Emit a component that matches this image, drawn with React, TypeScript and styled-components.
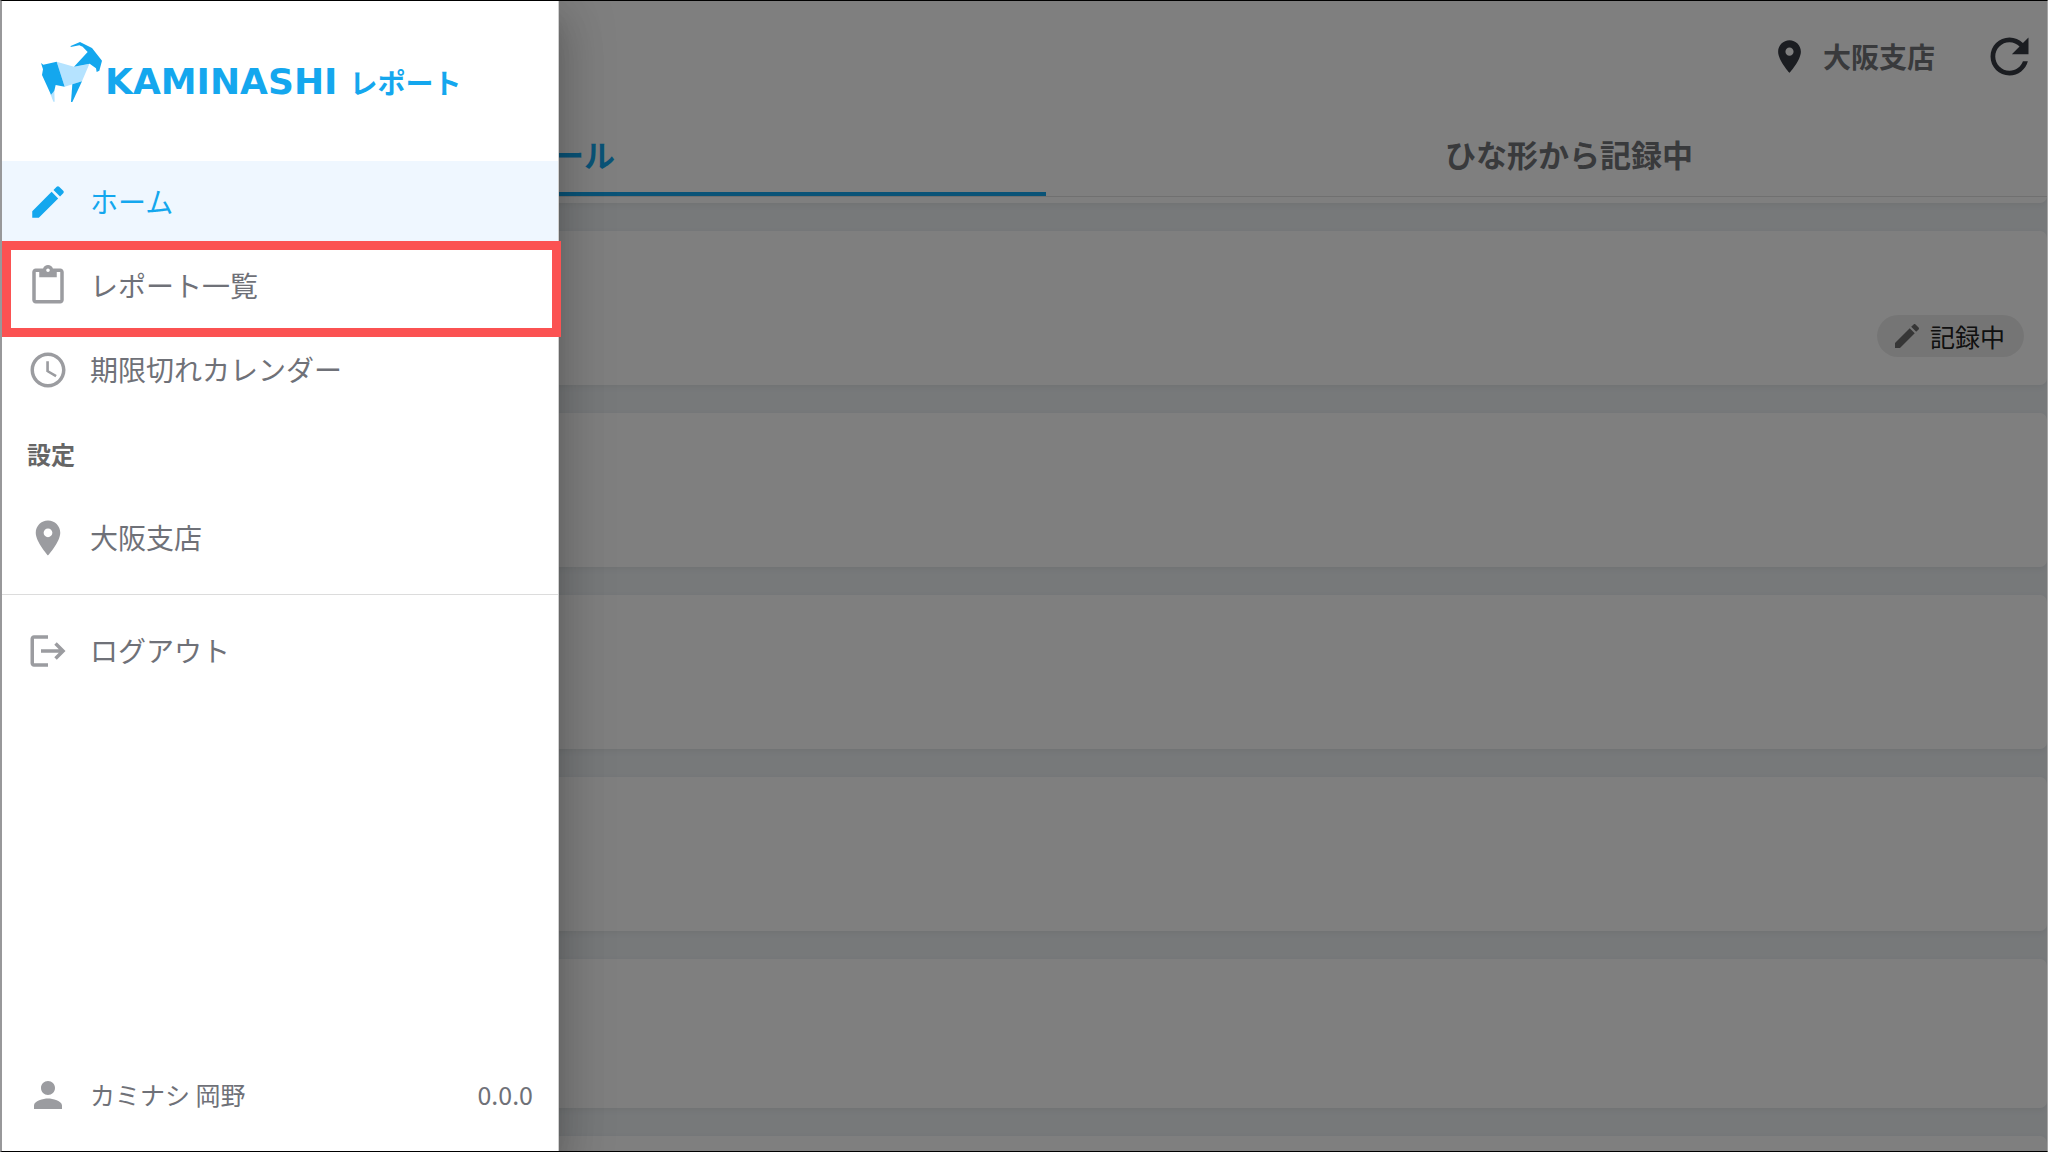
import React from "react";
import styled, { createGlobalStyle } from "styled-components";

const blue = "#14a7ee";
const ink = "#6f7178";
const iconGrey = "#9b9ca0";
const headerInk = "#727478";
const headerIcon = "#373a43";

const GlobalStyle = createGlobalStyle`
  * { box-sizing: border-box; }
  body {
    margin: 0;
    font-family: "Noto Sans CJK JP", sans-serif;
    background: #eef2f5;
    overflow: hidden;
  }
  button { font-family: inherit; border: 0; background: none; padding: 0; cursor: pointer; }
`;

const Screen = styled.div`
  position: relative;
  height: 100vh;
  overflow: hidden;
`;

const Frame = styled.div`
  position: absolute;
  inset: 0;
  border-top: 1px solid #000;
  border-bottom: 1px solid #000;
  border-left: 2px solid #98989a;
  border-right: 1px solid #a6a6a6;
  pointer-events: none;
`;

const Page = styled.div`
  display: flex;
  flex-direction: column;
  gap: 28px;
  height: 100%;
  padding-right: 1px;
`;

const Header = styled.header`
  background: #fff;
  border-radius: 0 0 7px 7px;
  box-shadow: 0 2px 6px rgba(0, 0, 0, 0.06);
  padding-bottom: 6px;
`;

const Toolbar = styled.div`
  display: flex;
  align-items: center;
  justify-content: flex-end;
  height: 112px;
  padding-right: 9px;
`;

const BranchButton = styled.button`
  display: flex;
  align-items: center;
  gap: 14px;
  margin-right: 46px;
  font-size: 28px;
  line-height: 42px;
  font-weight: 700;
  color: ${headerInk};
`;

const RefreshButton = styled.button`
  display: flex;
`;

const Tabs = styled.nav`
  display: flex;
  height: 85px;
  border-bottom: 1px solid #e0e0e0;
  overflow: hidden;
`;

const Tab = styled.button<{ $active?: boolean }>`
  flex: 0 0 51.1%;
  padding-top: 3px;
  font-size: 31px;
  line-height: 48px;
  font-weight: 700;
  color: ${(p) => (p.$active ? blue : headerInk)};
  border-bottom: 4px solid ${(p) => (p.$active ? blue : "transparent")};
`;

const Cards = styled.main`
  display: flex;
  flex-direction: column;
  gap: 28px;
`;

const Card = styled.article<{ $short?: boolean }>`
  display: flex;
  align-items: flex-end;
  justify-content: flex-end;
  flex: none;
  height: ${(p) => (p.$short ? 149 : 154)}px;
  padding: 28px 23px;
  background: #fff;
  border-radius: 7px;
  box-shadow: 0 2px 6px rgba(0, 0, 0, 0.06);
`;

const Chip = styled.span`
  display: flex;
  align-items: center;
  gap: 7px;
  height: 42px;
  padding: 0 19px 0 14px;
  border-radius: 21px;
  background: #ebebeb;
  color: #212121;
  font-size: 25px;
  line-height: 36px;
`;

const Backdrop = styled.div`
  position: absolute;
  inset: 0;
  background: rgba(0, 0, 0, 0.5);
`;

const Drawer = styled.aside`
  display: flex;
  flex-direction: column;
  width: 559px;
  height: 100%;
  padding: 0 0 14px 2px;
  background: #fff;
  border-right: 1px solid #d0d0d0;
  box-shadow:
    0 14px 18px -9px rgba(0, 0, 0, 0.2),
    0 28px 42px 4px rgba(0, 0, 0, 0.14),
    0 10px 52px 9px rgba(0, 0, 0, 0.12);
`;

const Brand = styled.a`
  display: flex;
  align-items: flex-start;
  height: 161px;
  padding: 41px 0 0 38px;
  color: ${blue};
  text-decoration: none;
`;

const BrandText = styled.span`
  display: flex;
  align-items: baseline;
  gap: 12px;
  margin: 17px 0 0 2px;
  font-weight: 700;
  line-height: 48px;
`;

const BrandName = styled.span`
  font-family: "DejaVu Sans", sans-serif;
  font-size: 36px;
`;

const BrandProduct = styled.span`
  font-size: 28px;
`;

const Menu = styled.nav`
  display: flex;
  flex-direction: column;
  flex: 1;
`;

const Item = styled.button<{ $active?: boolean }>`
  position: relative;
  display: flex;
  align-items: center;
  gap: 21px;
  height: 84px;
  padding: 0 25px 4px;
  font-size: 28px;
  line-height: 42px;
  text-align: left;
  color: ${(p) => (p.$active ? blue : ink)};
  background: ${(p) => (p.$active ? "#eff7ff" : "transparent")};
  svg {
    margin-top: 2px;
    color: ${(p) => (p.$active ? blue : iconGrey)};
  }
`;

const Highlight = styled.span`
  position: absolute;
  inset: -4px -3px -8px 0;
  border: 9px solid #fb5252;
`;

const SectionTitle = styled.h2`
  margin: 0;
  padding: 0 25px 2px;
  font-size: 24px;
  line-height: 82px;
  font-weight: 700;
  color: #666;
`;

const Divider = styled.hr`
  width: 100%;
  height: 1px;
  margin: 13px 0 15px;
  border: 0;
  background: #dcdcdc;
`;

const Account = styled.footer`
  display: flex;
  align-items: center;
  gap: 21px;
  height: 84px;
  padding: 0 25px 4px;
  font-size: 25px;
  line-height: 36px;
  color: ${ink};
  svg {
    margin-top: 2px;
    color: ${iconGrey};
  }
`;

const Version = styled.span`
  margin-left: auto;
`;

const Svg = styled.svg`
  display: block;
  flex: none;
  fill: currentColor;
`;

const paths = {
  edit: "M3 17.25V21h3.75L17.81 9.94l-3.75-3.75L3 17.25zM20.71 7.04c.39-.39.39-1.02 0-1.41l-2.34-2.34c-.39-.39-1.02-.39-1.41 0l-1.83 1.83 3.75 3.75 1.83-1.83z",
  clipboard:
    "M19 2h-4.18C14.4.84 13.3 0 12 0c-1.3 0-2.4.84-2.82 2H5c-1.1 0-2 .9-2 2v16c0 1.1.9 2 2 2h14c1.1 0 2-.9 2-2V4c0-1.1-.9-2-2-2zm-7 0c.55 0 1 .45 1 1s-.45 1-1 1-1-.45-1-1 .45-1 1-1zm7 18H5V4h2v3h10V4h2v16z",
  clock:
    "M11.99 2C6.47 2 2 6.48 2 12s4.47 10 9.99 10C17.52 22 22 17.52 22 12S17.52 2 11.99 2zM12 20c-4.42 0-8-3.58-8-8s3.58-8 8-8 8 3.58 8 8-3.58 8-8 8zM12.5 7H11v6l5.25 3.15.75-1.23-4.5-2.67z",
  pin: "M12 2C8.13 2 5 5.13 5 9c0 5.25 7 13 7 13s7-7.75 7-13c0-3.87-3.13-7-7-7zm0 9.5c-1.38 0-2.5-1.12-2.5-2.5s1.12-2.5 2.5-2.5 2.5 1.12 2.5 2.5-1.12 2.5-2.5 2.5z",
  logout:
    "M17 7l-1.41 1.41L18.17 11H8v2h10.17l-2.58 2.58L17 17l5-5zM4 5h8V3H4c-1.1 0-2 .9-2 2v14c0 1.1.9 2 2 2h8v-2H4V5z",
  person:
    "M12 12c2.21 0 4-1.79 4-4s-1.79-4-4-4-4 1.79-4 4 1.79 4 4 4zm0 2c-2.67 0-8 1.34-8 4v2h16v-2c0-2.66-5.33-4-8-4z",
  refresh:
    "M17.65 6.35C16.2 4.9 14.21 4 12 4c-4.42 0-7.99 3.58-7.99 8s3.57 8 7.99 8c3.73 0 6.84-2.55 7.73-6h-2.08c-.82 2.33-3.04 4-5.65 4-3.31 0-6-2.69-6-6s2.69-6 6-6c1.66 0 3.14.69 4.22 1.78L13 11h7V4l-2.35 2.35z",
};

function Icon({ name, size = 42, color }: { name: keyof typeof paths; size?: number; color?: string }) {
  return (
    <Svg viewBox="0 0 24 24" width={size} height={size} color={color} aria-hidden="true">
      <path d={paths[name]} />
    </Svg>
  );
}

function Goat() {
  return (
    <Svg viewBox="60 33 189 186" width={63} height={62} aria-hidden="true">
      <path fill="#b5e3ff" d="M110 95L162 110L208 102L186 154L134 170ZM91 191L103 182L104 215H100Z" />
      <path d="M63 99L70 104L110 95L134 170L107 165L103 182L93 194L66 135L69 118Z" />
      <path d="M186 154L157 216H153L157 163Z" />
      <path d="M162 110L203 66L188 50L178 46L152 51V48L180 36L216 54L246 92L238 122L230 126L228 115L209 101Z" />
    </Svg>
  );
}

export default function App() {
  return (
    <Screen>
      <GlobalStyle />
      <Page>
        <Header>
          <Toolbar>
            <BranchButton>
              <Icon name="pin" size={39} color={headerIcon} />
              大阪支店
            </BranchButton>
            <RefreshButton aria-label="更新">
              <Icon name="refresh" size={57} color={headerIcon} />
            </RefreshButton>
          </Toolbar>
          <Tabs>
            <Tab $active>スケジュール</Tab>
            <Tab>ひな形から記録中</Tab>
          </Tabs>
        </Header>
        <Cards>
          <Card>
            <Chip>
              <Icon name="edit" size={32} color="#6c6c6c" />
              記録中
            </Chip>
          </Card>
          <Card />
          <Card />
          <Card />
          <Card $short />
          <Card />
        </Cards>
      </Page>
      <Backdrop>
        <Drawer>
          <Brand href="#">
            <Goat />
            <BrandText>
              <BrandName>KAMINASHI</BrandName>
              <BrandProduct>レポート</BrandProduct>
            </BrandText>
          </Brand>
          <Menu>
            <Item $active>
              <Icon name="edit" />
              ホーム
            </Item>
            <Item>
              <Icon name="clipboard" />
              レポート一覧
              <Highlight />
            </Item>
            <Item>
              <Icon name="clock" />
              期限切れカレンダー
            </Item>
            <SectionTitle>設定</SectionTitle>
            <Item>
              <Icon name="pin" />
              大阪支店
            </Item>
            <Divider />
            <Item>
              <Icon name="logout" />
              ログアウト
            </Item>
          </Menu>
          <Account>
            <Icon name="person" />
            カミナシ 岡野
            <Version>0.0.0</Version>
          </Account>
        </Drawer>
      </Backdrop>
      <Frame />
    </Screen>
  );
}
